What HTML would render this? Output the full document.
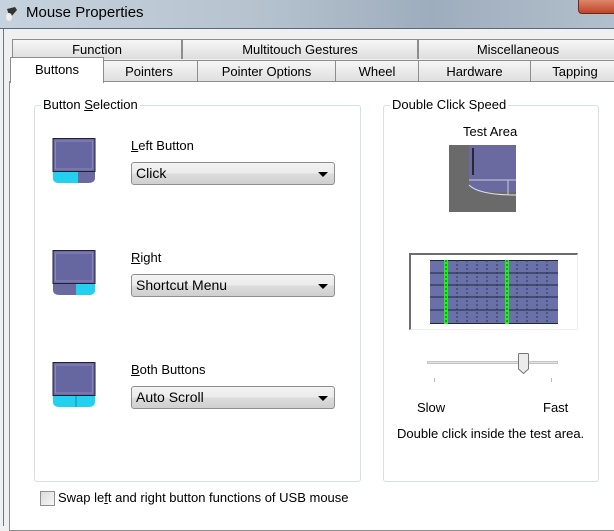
<!DOCTYPE html>
<html><head><style>
*{margin:0;padding:0;box-sizing:border-box}
body{width:614px;height:526px;overflow:hidden;position:relative;font-family:"Liberation Sans",sans-serif;font-size:13px;color:#000;background:#f0f0f0}
.a{position:absolute}
.title{left:0;top:0;width:614px;height:29px;background:linear-gradient(90deg,#c6d2dd 0%,#b7c4d0 40%,#9eadbd 70%,#b2bfcc 100%);border-bottom:1px solid #5a6a7a}
.tab{position:absolute;height:20px;border:1px solid #8d8d8d;border-bottom:none;background:linear-gradient(#f6f6f6,#dedede);text-align:center;line-height:19px;font-size:13px}
.grp{position:absolute;border:1px solid #d5dfe5;border-radius:3px}
.lg{position:absolute;top:-9px;background:#fff;padding:0 2px;font-size:13px}
.dd{position:absolute;width:204px;height:23px;border:1px solid #8e8f8f;border-radius:3px;background:linear-gradient(#f2f2f2,#ebebeb 50%,#dddddd 51%,#cfcfcf);padding-left:4px;line-height:21px;font-size:14px}
.dd:after{content:"";position:absolute;right:6px;top:9px;border-left:5px solid transparent;border-right:5px solid transparent;border-top:5px solid #000}
.lbl{position:absolute;font-size:13px}
</style></head><body>
<div class="a title"></div>
<svg class="a" style="left:4px;top:5px" width="16" height="18"><path d="M3 4 L11 2 L13 5 L6 13 Z" fill="#333"/><ellipse cx="5" cy="12" rx="3" ry="4" fill="#eee"/></svg>
<div class="a" style="left:26px;top:4px;font-size:15px">Mouse Properties</div>
<div class="a" style="left:578px;top:-2px;width:40px;height:16px;background:linear-gradient(#e08a70,#c0452a);border:1px solid #6b2a1a;border-radius:0 0 4px 4px"></div>
<div class="a" style="left:3px;top:29px;width:1px;height:497px;background:#6b7682"></div>
<div class="a" style="left:4px;top:29px;width:610px;height:497px;background:#f0f0f0"></div>
<div class="tab" style="left:12px;top:39px;width:170px">Function</div>
<div class="tab" style="left:182px;top:39px;width:236px">Multitouch Gestures</div>
<div class="tab" style="left:418px;top:39px;width:200px">Miscellaneous</div>
<div class="tab" style="left:88px;top:60px;width:110px;height:22px;line-height:22px;padding-left:12px">Pointers</div>
<div class="tab" style="left:197px;top:60px;width:139px;height:22px;line-height:22px">Pointer Options</div>
<div class="tab" style="left:335px;top:60px;width:84px;height:22px;line-height:22px">Wheel</div>
<div class="tab" style="left:418px;top:60px;width:113px;height:22px;line-height:22px">Hardware</div>
<div class="tab" style="left:530px;top:60px;width:90px;height:22px;line-height:22px">Tapping</div>
<div class="a" style="left:9px;top:81px;width:610px;height:450px;background:#fff;border:1px solid #8d8d8d"></div>
<div class="a" style="left:10px;top:57px;width:94px;height:26px;background:#fff;border:1px solid #8d8d8d;border-bottom:none;text-align:center;line-height:24px;font-size:13px">Buttons</div>
<div class="grp" style="left:34px;top:105px;width:327px;height:377px"><span class="lg" style="left:6px">Button <u>S</u>election</span></div>
<svg class="a" style="left:52px;top:138px" width="46" height="48"><rect x="1" y="0.5" width="42" height="33" fill="#6a6a9e" stroke="#1f1f3a"/><rect x="3.5" y="3" width="37" height="28" fill="#6666a0" stroke="#8888bb"/><path d="M1 34 H43 V40 Q43 45 36 45 H8 Q1 45 1 40 Z" fill="#6a6a9e"/><path d="M1 34 H26 V45 H8 Q1 45 1 40 Z" fill="#22d0f0"/></svg>
<div class="lbl" style="left:131px;top:138px"><u>L</u>eft Button</div>
<div class="dd" style="left:131px;top:162px">Click</div>
<svg class="a" style="left:52px;top:250px" width="46" height="48"><rect x="1" y="0.5" width="42" height="33" fill="#6a6a9e" stroke="#1f1f3a"/><rect x="3.5" y="3" width="37" height="28" fill="#6666a0" stroke="#8888bb"/><path d="M1 34 H43 V40 Q43 45 36 45 H8 Q1 45 1 40 Z" fill="#6a6a9e"/><path d="M24 34 H43 V40 Q43 45 36 45 H24 Z" fill="#22d0f0"/></svg>
<div class="lbl" style="left:131px;top:250px"><u>R</u>ight</div>
<div class="dd" style="left:131px;top:274px">Shortcut Menu</div>
<svg class="a" style="left:52px;top:362px" width="46" height="48"><rect x="1" y="0.5" width="42" height="33" fill="#6a6a9e" stroke="#1f1f3a"/><rect x="3.5" y="3" width="37" height="28" fill="#6666a0" stroke="#8888bb"/><path d="M1 34 H43 V40 Q43 45 36 45 H8 Q1 45 1 40 Z" fill="#22d0f0"/><line x1="24" y1="34" x2="24" y2="45" stroke="#1a8aa0"/></svg>
<div class="lbl" style="left:131px;top:362px"><u>B</u>oth Buttons</div>
<div class="dd" style="left:131px;top:386px">Auto Scroll</div>
<div class="a" style="left:40px;top:491px;width:15px;height:15px;border:1px solid #8e8f8f;background:linear-gradient(135deg,#dcdcdc,#f6f6f6)"></div>
<div class="lbl" style="left:58px;top:490px">Swap le<u>f</u>t and right button functions of USB mouse</div>
<div class="grp" style="left:383px;top:105px;width:216px;height:377px"><span class="lg" style="left:6px">Double Click Speed</span></div>
<div class="lbl" style="left:463px;top:124px">Test Area</div>
<svg class="a" style="left:449px;top:145px" width="67" height="67"><rect width="67" height="67" fill="#6a6a6a"/><path d="M20 0 H67 V47 H28 Q20 42 20 34 Z" fill="#6a6aa0"/><line x1="24" y1="3" x2="24" y2="30" stroke="#111" stroke-width="1.5"/><line x1="20" y1="35" x2="67" y2="35" stroke="#ccd" stroke-width="1"/><path d="M20 40 Q30 50 67 50" stroke="#dde" fill="none"/><line x1="59" y1="35" x2="59" y2="50" stroke="#ccd"/></svg>
<div class="a" style="left:409px;top:253px;width:169px;height:77px;border-top:2px solid #6d6d6d;border-left:2px solid #6d6d6d;border-right:1px solid #eee;border-bottom:1px solid #eee"></div>
<svg class="a" style="left:430px;top:260px" width="128" height="64"><rect width="128" height="64" fill="#6a70a8"/><g stroke="#1a2a3a" stroke-width="1"><line x1="0" y1="0.5" x2="128" y2="0.5"/><line x1="0" y1="13" x2="128" y2="13"/><line x1="0" y1="25" x2="128" y2="25"/><line x1="0" y1="37" x2="128" y2="37"/><line x1="0" y1="50" x2="128" y2="50"/><line x1="0" y1="63.5" x2="128" y2="63.5"/></g><g stroke="#2a3a5a" stroke-dasharray="2,2"><line x1="27" y1="0" x2="27" y2="64"/><line x1="37" y1="0" x2="37" y2="64"/><line x1="47" y1="0" x2="47" y2="64"/><line x1="57" y1="0" x2="57" y2="64"/><line x1="67" y1="0" x2="67" y2="64"/><line x1="87" y1="0" x2="87" y2="64"/><line x1="97" y1="0" x2="97" y2="64"/><line x1="107" y1="0" x2="107" y2="64"/><line x1="117" y1="0" x2="117" y2="64"/></g><rect x="14" y="0" width="4" height="64" fill="#22ee22"/><rect x="75" y="0" width="4" height="64" fill="#22ee22"/><line x1="16" y1="0" x2="16" y2="64" stroke="#115511" stroke-dasharray="2,2"/><line x1="77" y1="0" x2="77" y2="64" stroke="#115511" stroke-dasharray="2,2"/></svg>
<div class="a" style="left:427px;top:361px;width:131px;height:3px;background:#e2e2e2;border:1px solid #c4c4c4"></div>
<div class="a" style="left:434px;top:378px;width:1px;height:4px;background:#bbb"></div>
<div class="a" style="left:551px;top:378px;width:1px;height:4px;background:#bbb"></div>
<svg class="a" style="left:518px;top:353px" width="11" height="22"><path d="M0.5 1.5 Q0.5 0.5 1.5 0.5 H9.5 Q10.5 0.5 10.5 1.5 V16 L5.5 20.5 L0.5 16 Z" fill="#ececec" stroke="#777"/></svg>
<div class="lbl" style="left:417px;top:400px">Slow</div>
<div class="lbl" style="left:543px;top:400px">Fast</div>
<div class="lbl" style="left:397px;top:426px">Double click inside the test area.</div>
</body></html>
